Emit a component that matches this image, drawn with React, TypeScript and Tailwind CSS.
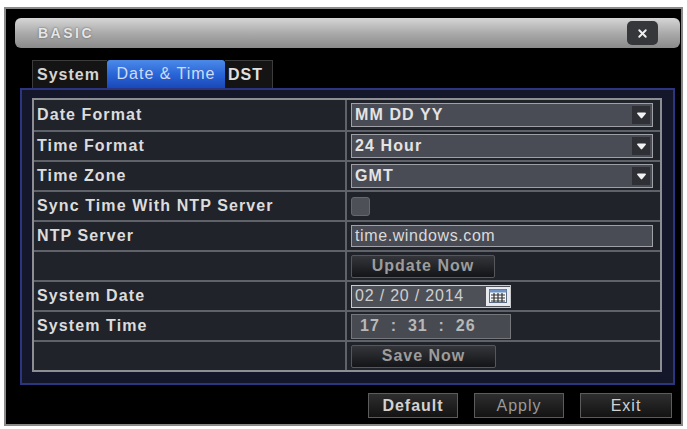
import { X } from "lucide-react"

const font = { fontFamily: '"Liberation Sans", Arial, sans-serif' }

function DropArrow() {
  return (
    <div className="w-[18px] h-[18px] mr-[2px] bg-[#2e3036] flex items-center justify-center">
      <svg width="11" height="7" viewBox="0 0 11 7">
        <path d="M1 1.5 Q1 0.5 2 0.5 H9 Q10 0.5 10 1.5 L6.2 6 Q5.5 6.8 4.8 6 Z" fill="#f2f2f2" />
      </svg>
    </div>
  )
}

function Select({ value }: { value: string }) {
  return (
    <div className="w-[302px] h-[24px] bg-[#4a4c55] border border-[#9fa1a7] flex items-center justify-between">
      <span className="pl-[3px] text-[16px] font-bold tracking-[1.1px] text-[#e4e4e4]">{value}</span>
      <DropArrow />
    </div>
  )
}

function DarkButton({ label, w, h }: { label: string; w: string; h: string }) {
  return (
    <div
      className={`${w} ${h} bg-gradient-to-b from-[#34363b] to-[#141518] border border-[#55575c] rounded-[2px] flex items-center justify-center text-[16px] font-bold tracking-[1px] text-[#9c9c9c]`}
    >
      {label}
    </div>
  )
}

function Row({ label, children, first }: { label: string; children?: React.ReactNode; first?: boolean }) {
  return (
    <div className={`flex h-[30px] ${first ? "" : "border-t-2 border-[#606269]"}`}>
      <div className="w-[313px] border-r-2 border-[#606269] flex items-center pl-[3px] text-[16px] font-bold tracking-[1.1px] text-[#dcdcdc]">
        {label}
      </div>
      <div className="flex-1 flex items-center pl-[4px]">{children}</div>
    </div>
  )
}

function CalendarIcon() {
  return (
    <div className="w-[24px] h-[19px] bg-[#e6e9ee] flex items-center justify-center">
      <svg width="18" height="14" viewBox="0 0 18 14">
        <rect x="0.5" y="0.5" width="17" height="13" fill="#f4f6f8" stroke="#5a6a80" />
        <rect x="0.5" y="0.5" width="17" height="3" fill="#6f93c8" />
        <path d="M2 6 H16 M2 9 H16 M2 12 H16 M5 4 V13 M9 4 V13 M13 4 V13" stroke="#333" strokeWidth="1.2" />
      </svg>
    </div>
  )
}

export default function App() {
  return (
    <div className="w-[687px] h-[429px] bg-white overflow-hidden" style={font}>
      <div className="ml-[4px] mt-[7px] w-[679px] h-[419px] border-2 border-[#8a8a8a] bg-black flex flex-col">
        {/* title bar */}
        <div className="mt-[9px] ml-[9px] mr-[1px] h-[30px] rounded-[6px] bg-gradient-to-b from-[#d6d6d6] via-[#ababab] to-[#8a8a8a] flex items-center justify-between">
          <span className="pl-[23px] text-[14px] font-bold tracking-[2.5px] text-[#e6e6e6] [text-shadow:0_0_2px_#555]">BASIC</span>
          <div className="mr-[22px] w-[31px] h-[24px] rounded-[5px] bg-[#35373b] flex items-center justify-center">
            <X size={13} strokeWidth={3.5} color="#f0f0f0" />
          </div>
        </div>

        {/* tabs */}
        <div className="mt-[12px] ml-[26px] h-[28px] flex">
          <div className="w-[75px] h-full bg-[#141414] border-t border-l border-[#3c3c3c] flex items-center pl-[4px] text-[16px] font-bold tracking-[1px] text-[#d4d4d4]">
            System
          </div>
          <div className="w-[118px] h-full bg-gradient-to-b from-[#4c8ae8] via-[#2a66d8] to-[#1a48b8] rounded-t-[3px] flex items-center justify-center text-[16px] tracking-[1px] text-[#cfdcf2]">
            Date &amp; Time
          </div>
          <div className="w-[48px] h-full bg-[#141414] border-t border-r border-[#3c3c3c] flex items-center pl-[3px] text-[16px] font-bold tracking-[1px] text-[#e0e0e0]">
            DST
          </div>
        </div>

        {/* panel */}
        <div className="ml-[14px] w-[655px] h-[297px] border-2 border-[#2c3580] bg-[#14172a] pl-[10px] pt-[8px]">
          <div className="w-[630px] border-2 border-[#8c8e93] bg-[#21232b]">
            <Row label="Date Format" first>
              <Select value="MM DD YY" />
            </Row>
            <Row label="Time Format">
              <Select value="24 Hour" />
            </Row>
            <Row label="Time Zone">
              <Select value="GMT" />
            </Row>
            <Row label="Sync Time With NTP Server">
              <div className="w-[19px] h-[19px] rounded-[3px] bg-[#4e5057] border border-[#66686e]" />
            </Row>
            <Row label="NTP Server">
              <div className="w-[302px] h-[22px] bg-[#4a4c55] border border-[#9fa1a7] flex items-center pl-[3px] text-[16px] tracking-[0.6px] text-[#dadada]">
                time.windows.com
              </div>
            </Row>
            <Row label="">
              <DarkButton label="Update Now" w="w-[144px]" h="h-[23px]" />
            </Row>
            <Row label="System Date">
              <div className="w-[160px] h-[23px] bg-[#4e5058] border border-[#c9cacd] flex items-center justify-between">
                <span className="pl-[3px] text-[16px] tracking-[0.8px] text-[#cfcfcf]">02 / 20 / 2014</span>
                <CalendarIcon />
              </div>
            </Row>
            <Row label="System Time">
              <div className="w-[160px] h-[25px] bg-[#484a52] border border-[#75777c] flex items-center pl-[8px] text-[16px] font-bold tracking-[1px] text-[#b8b8b8] whitespace-pre">
                {"17  :  31  :  26"}
              </div>
            </Row>
            <Row label="">
              <DarkButton label="Save Now" w="w-[145px]" h="h-[23px]" />
            </Row>
          </div>
        </div>

        {/* bottom buttons */}
        <div className="mt-[8px] mr-[9px] flex justify-end gap-[16px]">
          <div className="w-[90px] h-[25px] bg-gradient-to-b from-[#2e2e2e] to-[#131313] border border-[#5c5c5c] flex items-center justify-center text-[16px] font-bold tracking-[1px] text-[#d2d2d2]">
            Default
          </div>
          <div className="w-[90px] h-[25px] bg-gradient-to-b from-[#2e2e2e] to-[#131313] border border-[#5c5c5c] flex items-center justify-center text-[16px] tracking-[1px] text-[#9a9a9a]">
            Apply
          </div>
          <div className="w-[92px] h-[25px] bg-gradient-to-b from-[#2e2e2e] to-[#131313] border border-[#5c5c5c] flex items-center justify-center text-[16px] tracking-[1px] text-[#d2d2d2]">
            Exit
          </div>
        </div>
      </div>
    </div>
  )
}
